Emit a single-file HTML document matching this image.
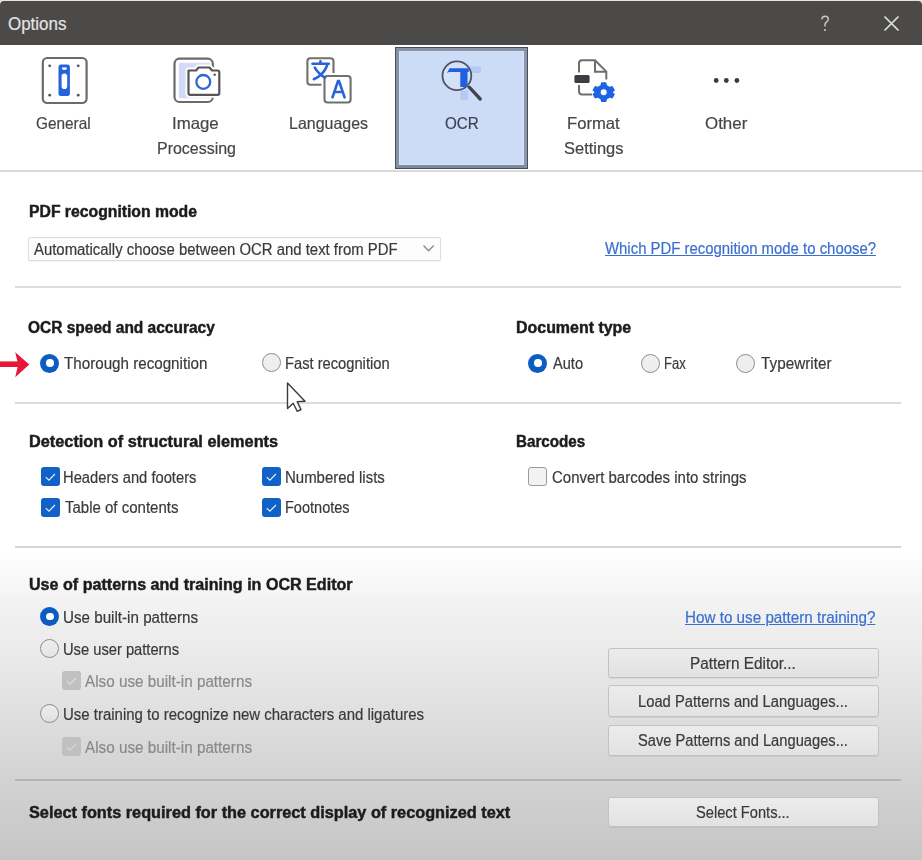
<!DOCTYPE html>
<html><head><meta charset="utf-8">
<style>
html,body{margin:0;padding:0;width:922px;height:860px;overflow:hidden;}
body{position:relative;font-family:"Liberation Sans",sans-serif;background:linear-gradient(to bottom,#ffffff 0px,#ffffff 550px,#f3f3f3 600px,#e2e2e2 700px,#d2d2d2 780px,#c6c6c6 860px);}
.tx{position:absolute;white-space:nowrap;transform-origin:0 0;}
.tx.b{-webkit-text-stroke:0.45px currentColor;}
.tx.r{-webkit-text-stroke:0.2px currentColor;}
.abs{position:absolute;}
.sep{position:absolute;left:15px;width:886px;height:2px;background:#dcdcdc;}
.rad{position:absolute;width:19px;height:19px;border-radius:50%;box-sizing:border-box;}
.rad.on{background:#0b5dc2;}
.rad.on::after{content:"";position:absolute;left:5.7px;top:5.7px;width:7.6px;height:7.6px;border-radius:50%;background:#fff;}
.rad.off{border:1.6px solid #8c8c8c;background:linear-gradient(rgba(238,238,238,0.9),rgba(225,225,225,0.6));}
.chk{position:absolute;width:19px;height:19px;border-radius:3px;box-sizing:border-box;}
.chk.on{background:#1061c8;}
.chk.off{border:1.5px solid #9a9a9a;background:#f2f2f2;}
.chk.dis{background:#c0c0c0;}
.btn{position:absolute;left:608px;width:271px;box-sizing:border-box;border:1px solid #c2c2c2;border-radius:3px;background:linear-gradient(#ececec,#e2e2e2);box-shadow:0 1px 0 rgba(0,0,0,0.06);}
#wrap{position:absolute;left:0;top:0;width:922px;height:860px;filter:blur(0.35px);}
</style></head><body><div id="wrap">
<!-- title bar -->
<div class="abs" style="left:0;top:0;width:922px;height:2px;background:#e4e4e4"></div>
<div class="abs" style="left:0;top:1px;width:922px;height:44px;background:#4b4a48;border-radius:4px 4px 0 0"></div>
<svg class="abs" style="left:815px;top:12px" width="20" height="24" viewBox="0 0 20 24">
<path d="M6.8 7.4 C7 5 8.5 4.2 10 4.2 C11.9 4.2 13.3 5.4 13.3 7.2 C13.3 9.2 11.6 9.9 10.6 10.9 C10 11.5 9.9 12.3 9.9 14.4" fill="none" stroke="#c4c4c4" stroke-width="1.5"/>
<circle cx="9.9" cy="18" r="1.1" fill="#c4c4c4"/>
</svg>
<svg class="abs" style="left:882px;top:14px" width="19" height="19" viewBox="0 0 19 19">
<path d="M2.5 2.5 L16.5 16.5 M16.5 2.5 L2.5 16.5" stroke="#dedede" stroke-width="1.7"/>
</svg>

<!-- toolbar -->
<div class="abs" style="left:395px;top:47px;width:133px;height:122px;box-sizing:border-box;border:1.6px solid #474e59;background:#cddcf6;">
  <div class="abs" style="left:0;top:0;right:0;bottom:0;border:3px solid #8792a6;border-right-color:#8d97ab;border-bottom-color:#7f899c"></div>
  <div class="abs" style="left:3px;top:3px;right:3px;bottom:3px;border:1px solid #d6e2f8;"></div>
</div>
<div class="abs" style="left:0;top:170px;width:922px;height:2px;background:#dadada"></div>

<!-- General icon -->
<svg class="abs" style="left:30px;top:50px" width="70" height="60" viewBox="0 0 70 60">
<rect x="12.8" y="8" width="43.8" height="45" rx="4.5" fill="#fff" stroke="#6b6b6b" stroke-width="2.2"/>
<circle cx="19.7" cy="15.8" r="1.4" fill="#555"/><circle cx="48.2" cy="15.8" r="1.4" fill="#555"/>
<circle cx="19.7" cy="45.2" r="1.4" fill="#555"/><circle cx="48.2" cy="45.2" r="1.4" fill="#555"/>
<rect x="28.5" y="14.4" width="11.4" height="31.6" rx="2.5" fill="#2463dc"/>
<ellipse cx="34.4" cy="18.6" rx="2.6" ry="1.3" fill="#fff"/>
<rect x="31.6" y="23.5" width="5.6" height="15.5" rx="2.8" fill="#fff"/>
</svg>

<!-- Image processing icon -->
<svg class="abs" style="left:165px;top:50px" width="70" height="60" viewBox="0 0 70 60">
<rect x="9.5" y="8.7" width="38.3" height="43.3" rx="5" fill="#fff" stroke="#6b6b6b" stroke-width="2.2"/>
<rect x="13.8" y="12.8" width="31.5" height="35.5" rx="1.5" fill="#d3dbf6"/>
<path d="M23.5 20.5 L31 20.5 L33.5 17.5 L44.5 17.5 L47 20.5 L52.5 20.5 Q54.3 20.5 54.3 22.3 L54.3 43 Q54.3 44.8 52.5 44.8 L25.3 44.8 Q23.5 44.8 23.5 43 Z" fill="#fff" stroke="#fff" stroke-width="6" stroke-linejoin="round"/>
<path d="M23.5 20.5 L31 20.5 L33.5 17.5 L44.5 17.5 L47 20.5 L52.5 20.5 Q54.3 20.5 54.3 22.3 L54.3 43 Q54.3 44.8 52.5 44.8 L25.3 44.8 Q23.5 44.8 23.5 43 Z" fill="#fff" stroke="#555" stroke-width="2.2" stroke-linejoin="round"/>
<circle cx="38.3" cy="31.9" r="6.9" fill="none" stroke="#2f66d0" stroke-width="2.3"/>
<circle cx="49.7" cy="24.7" r="1.2" fill="#555"/>
</svg>

<!-- Languages icon -->
<svg class="abs" style="left:295px;top:50px" width="70" height="60" viewBox="0 0 70 60">
<rect x="12.4" y="8.2" width="26.1" height="26.5" rx="3" fill="#fff" stroke="#707070" stroke-width="2.1"/>
<rect x="26.5" y="23" width="31" height="33" fill="#fff"/>
<rect x="29.5" y="26" width="26.1" height="26.5" rx="3" fill="#fff" stroke="#707070" stroke-width="2.1"/>
<g stroke="#2a63d8" stroke-width="2.6" fill="none" stroke-linecap="round">
<path d="M17.5 13.8 L33.8 13.8"/><path d="M25.4 11.2 L25.4 13.5"/>
<path d="M19.8 17.6 Q23.5 24 30 27.5"/><path d="M32 15.8 Q28.5 25 18.8 29.2"/>
<path d="M37.5 47.3 L43 31 L44 31 L49.6 47.3"/><path d="M39.8 42 L47.3 42"/>
</g>
</svg>

<!-- OCR icon -->
<svg class="abs" style="left:425px;top:50px" width="70" height="60" viewBox="0 0 70 60">
<rect x="43.5" y="16.5" width="12.5" height="6.5" fill="#a9bdf4" opacity="0.65"/>
<rect x="35.5" y="40.5" width="7.5" height="9.5" fill="#a9bdf4" opacity="0.65"/>
<circle cx="31.9" cy="25.8" r="14.4" fill="#d4e1f7" stroke="#4d5563" stroke-width="1.8"/>
<path d="M22 23 L24.5 18.3 L43.8 18.3 L43.8 22 L42.5 22 L42.5 37 L35.3 37 L35.3 22 L24 22 Z" fill="#1f5fe0"/>
<path d="M44.2 37.2 L55.2 49" stroke="#3d4450" stroke-width="3.3" stroke-linecap="round"/>
</svg>

<!-- Format Settings icon -->
<svg class="abs" style="left:560px;top:50px" width="70" height="60" viewBox="0 0 70 60">
<path d="M19 22.5 L19 13.5 Q19 10.3 22.2 10.3 L35 10.3 L46.3 21.6 L46.3 29.5" fill="none" stroke="#6e6e6e" stroke-width="2"/>
<path d="M19 35 L19 41.2 Q19 44.4 22.2 44.4 L32 44.4" fill="none" stroke="#6e6e6e" stroke-width="2"/>
<path d="M35 10.3 L35 21.8 L46.3 21.8" fill="none" stroke="#6e6e6e" stroke-width="2"/>
<rect x="14.4" y="25" width="15.2" height="8" rx="1.5" fill="#3b3f44"/>
<g transform="translate(43.7 42.1)">
<path d="M-2.4 -9.6 L2.4 -9.6 L3.2 -6.8 L5.8 -5.3 L8.6 -6.1 L11 -1.9 L8.9 0.1 L8.9 0.1 L11 2.1 L8.6 6.3 L5.8 5.5 L3.2 7 L2.4 9.8 L-2.4 9.8 L-3.2 7 L-5.8 5.5 L-8.6 6.3 L-11 2.1 L-8.9 0.1 L-11 -1.9 L-8.6 -6.1 L-5.8 -5.3 L-3.2 -6.8 Z" fill="#1f62e6" transform="scale(1.02)"/>
<circle cx="0" cy="0.1" r="3" fill="#fff"/>
</g>
</svg>

<!-- Other icon -->
<svg class="abs" style="left:690px;top:60px" width="70" height="40" viewBox="0 0 70 40">
<circle cx="26.2" cy="20.5" r="2.4" fill="#3a3a3a"/><circle cx="36.3" cy="20.5" r="2.4" fill="#3a3a3a"/><circle cx="46.9" cy="20.5" r="2.4" fill="#3a3a3a"/>
</svg>

<!-- body -->
<div class="abs" style="left:28px;top:237px;width:413px;height:24px;box-sizing:border-box;border:1px solid #dcdcdc;background:#fdfdfd;border-radius:2px;box-shadow:0 1px 1px rgba(0,0,0,0.05)"></div>
<svg class="abs" style="left:420px;top:240px" width="18" height="16" viewBox="0 0 18 16">
<path d="M3.5 5.5 L8.6 10.8 L13.7 5.5" fill="none" stroke="#8a8a8a" stroke-width="1.3"/>
</svg>
<div class="sep" style="top:286px"></div>
<div class="sep" style="top:402px"></div>
<div class="sep" style="top:546px;background:#d6d6d6"></div>
<div class="sep" style="top:779px;background:#b4b4b4"></div>

<!-- red arrow -->
<svg class="abs" style="left:0;top:345px" width="40" height="40" viewBox="0 0 40 40">
<path d="M0 16.4 L18 16.4 L18 22 L0 22 Z" fill="#e8163b"/>
<path d="M15.2 7.2 L29.3 19.4 L15.2 32.3 L18.2 19.4 Z" fill="#e8163b"/>
</svg>

<div class="rad on" style="left:40.3px;top:353.5px"></div>
<div class="rad off" style="left:261.7px;top:353.3px"></div>
<div class="rad on" style="left:528.4px;top:353.5px"></div>
<div class="rad off" style="left:641.2px;top:353.5px"></div>
<div class="rad off" style="left:736.4px;top:353.5px"></div>

<!-- cursor -->
<svg class="abs" style="left:283px;top:380px" width="30" height="34" viewBox="0 0 30 34">
<path d="M4.5 3 L4.5 28.5 L10.2 23.2 L14.2 31.3 L18 29.5 L14.2 21.6 L22 21.2 Z" fill="#fff" stroke="#3a3a3a" stroke-width="1.4" stroke-linejoin="round"/>
</svg>

<div class="chk on" style="left:40.6px;top:467.3px"></div>
<div class="chk on" style="left:40.6px;top:497.7px"></div>
<div class="chk on" style="left:261.9px;top:467.3px"></div>
<div class="chk on" style="left:261.9px;top:497.7px"></div>
<div class="chk off" style="left:528.4px;top:466.8px"></div>

<div class="rad on" style="left:40.3px;top:607.2px"></div>
<div class="rad off" style="left:40.3px;top:639.3px"></div>
<div class="chk dis" style="left:62.2px;top:671px"></div>
<div class="rad off" style="left:40.3px;top:704.4px"></div>
<div class="chk dis" style="left:62.2px;top:737px"></div>

<div class="btn" style="top:648px;height:30px"></div>
<div class="btn" style="top:684.8px;height:32px"></div>
<div class="btn" style="top:724.5px;height:31.5px"></div>
<div class="btn" style="top:796.7px;height:30.5px"></div>

<svg class="abs" style="left:40.6px;top:467.3px" width="19" height="19" viewBox="0 0 19 19"><path d="M4.8 10.2 L7.9 13.2 L13.9 7" fill="none" stroke="#fff" stroke-width="1.15" stroke-opacity="0.92"/></svg>
<svg class="abs" style="left:40.6px;top:497.7px" width="19" height="19" viewBox="0 0 19 19"><path d="M4.8 10.2 L7.9 13.2 L13.9 7" fill="none" stroke="#fff" stroke-width="1.15" stroke-opacity="0.92"/></svg>
<svg class="abs" style="left:261.9px;top:467.3px" width="19" height="19" viewBox="0 0 19 19"><path d="M4.8 10.2 L7.9 13.2 L13.9 7" fill="none" stroke="#fff" stroke-width="1.15" stroke-opacity="0.92"/></svg>
<svg class="abs" style="left:261.9px;top:497.7px" width="19" height="19" viewBox="0 0 19 19"><path d="M4.8 10.2 L7.9 13.2 L13.9 7" fill="none" stroke="#fff" stroke-width="1.15" stroke-opacity="0.92"/></svg>
<svg class="abs" style="left:62.2px;top:671px" width="19" height="19" viewBox="0 0 19 19"><path d="M4.8 10.2 L7.9 13.2 L13.9 7" fill="none" stroke="#e2e2e2" stroke-width="1.15" stroke-opacity="0.92"/></svg>
<svg class="abs" style="left:62.2px;top:737px" width="19" height="19" viewBox="0 0 19 19"><path d="M4.8 10.2 L7.9 13.2 L13.9 7" fill="none" stroke="#dadada" stroke-width="1.15" stroke-opacity="0.92"/></svg>

<div class="tx r" style="left:7.6px;top:15.0px;font-size:18px;line-height:18px;font-weight:400;color:#e4e4e4;transform:scaleX(0.9412);">Options</div>
<div class="tx r" style="left:36.1px;top:115.0px;font-size:16.5px;line-height:16.5px;font-weight:400;color:#464646;transform:scaleX(0.9318);">General</div>
<div class="tx r" style="left:172.3px;top:115.0px;font-size:16.5px;line-height:16.5px;font-weight:400;color:#464646;transform:scaleX(1.0183);">Image</div>
<div class="tx r" style="left:156.5px;top:139.5px;font-size:16.5px;line-height:16.5px;font-weight:400;color:#464646;transform:scaleX(0.9678);">Processing</div>
<div class="tx r" style="left:289.0px;top:115.0px;font-size:16.5px;line-height:16.5px;font-weight:400;color:#464646;transform:scaleX(0.9673);">Languages</div>
<div class="tx r" style="left:444.5px;top:115.0px;font-size:16.5px;line-height:16.5px;font-weight:400;color:#3d4250;transform:scaleX(0.9217);">OCR</div>
<div class="tx r" style="left:567.4px;top:115.0px;font-size:16.5px;line-height:16.5px;font-weight:400;color:#464646;transform:scaleX(1.0083);">Format</div>
<div class="tx r" style="left:564.2px;top:139.5px;font-size:16.5px;line-height:16.5px;font-weight:400;color:#464646;transform:scaleX(0.9979);">Settings</div>
<div class="tx r" style="left:704.8px;top:115.0px;font-size:16.5px;line-height:16.5px;font-weight:400;color:#464646;transform:scaleX(1.0247);">Other</div>
<div class="tx b" style="left:29.0px;top:204.0px;font-size:16px;line-height:16px;font-weight:700;color:#1c1c1c;transform:scaleX(0.9843);">PDF recognition mode</div>
<div class="tx b" style="left:28.2px;top:320.0px;font-size:16px;line-height:16px;font-weight:700;color:#1c1c1c;transform:scaleX(0.9680);">OCR speed and accuracy</div>
<div class="tx b" style="left:516.3px;top:320.0px;font-size:16px;line-height:16px;font-weight:700;color:#1c1c1c;transform:scaleX(0.9967);">Document type</div>
<div class="tx b" style="left:28.7px;top:434.0px;font-size:16px;line-height:16px;font-weight:700;color:#1c1c1c;transform:scaleX(1.0188);">Detection of structural elements</div>
<div class="tx b" style="left:516.3px;top:434.0px;font-size:16px;line-height:16px;font-weight:700;color:#1c1c1c;transform:scaleX(0.9476);">Barcodes</div>
<div class="tx b" style="left:28.6px;top:577.0px;font-size:16px;line-height:16px;font-weight:700;color:#1c1c1c;transform:scaleX(1.0056);">Use of patterns and training in OCR Editor</div>
<div class="tx b" style="left:28.5px;top:805.0px;font-size:16px;line-height:16px;font-weight:700;color:#1c1c1c;transform:scaleX(1.0173);">Select fonts required for the correct display of recognized text</div>
<div class="tx r" style="left:33.8px;top:242.0px;font-size:16px;line-height:16px;font-weight:400;color:#3a3a3a;transform:scaleX(0.9314);">Automatically choose between OCR and text from PDF</div>
<div class="tx r" style="left:605.0px;top:240.7px;font-size:16px;line-height:16px;font-weight:400;color:#3a6fd0;transform:scaleX(0.9319);text-decoration:underline;">Which PDF recognition mode to choose?</div>
<div class="tx r" style="left:64.4px;top:356.0px;font-size:16px;line-height:16px;font-weight:400;color:#3a3a3a;transform:scaleX(0.9483);">Thorough recognition</div>
<div class="tx r" style="left:285.0px;top:356.0px;font-size:16px;line-height:16px;font-weight:400;color:#3a3a3a;transform:scaleX(0.9188);">Fast recognition</div>
<div class="tx r" style="left:552.7px;top:356.0px;font-size:16px;line-height:16px;font-weight:400;color:#3a3a3a;transform:scaleX(0.9112);">Auto</div>
<div class="tx r" style="left:664.4px;top:356.0px;font-size:16px;line-height:16px;font-weight:400;color:#3a3a3a;transform:scaleX(0.8136);">Fax</div>
<div class="tx r" style="left:760.7px;top:356.0px;font-size:16px;line-height:16px;font-weight:400;color:#3a3a3a;transform:scaleX(0.9553);">Typewriter</div>
<div class="tx r" style="left:63.4px;top:470.0px;font-size:16px;line-height:16px;font-weight:400;color:#3a3a3a;transform:scaleX(0.9201);">Headers and footers</div>
<div class="tx r" style="left:64.5px;top:500.0px;font-size:16px;line-height:16px;font-weight:400;color:#3a3a3a;transform:scaleX(0.9374);">Table of contents</div>
<div class="tx r" style="left:284.7px;top:470.0px;font-size:16px;line-height:16px;font-weight:400;color:#3a3a3a;transform:scaleX(0.9353);">Numbered lists</div>
<div class="tx r" style="left:284.7px;top:500.0px;font-size:16px;line-height:16px;font-weight:400;color:#3a3a3a;transform:scaleX(0.9079);">Footnotes</div>
<div class="tx r" style="left:552.4px;top:470.0px;font-size:16px;line-height:16px;font-weight:400;color:#3a3a3a;transform:scaleX(0.9351);">Convert barcodes into strings</div>
<div class="tx r" style="left:63.0px;top:610.0px;font-size:16px;line-height:16px;font-weight:400;color:#3a3a3a;transform:scaleX(0.9487);">Use built-in patterns</div>
<div class="tx r" style="left:63.0px;top:642.0px;font-size:16px;line-height:16px;font-weight:400;color:#3a3a3a;transform:scaleX(0.9186);">Use user patterns</div>
<div class="tx r" style="left:85.2px;top:674.0px;font-size:16px;line-height:16px;font-weight:400;color:#8a8a8a;transform:scaleX(0.9532);">Also use built-in patterns</div>
<div class="tx r" style="left:63.0px;top:707.0px;font-size:16px;line-height:16px;font-weight:400;color:#3a3a3a;transform:scaleX(0.9353);">Use training to recognize new characters and ligatures</div>
<div class="tx r" style="left:85.2px;top:740.0px;font-size:16px;line-height:16px;font-weight:400;color:#8a8a8a;transform:scaleX(0.9532);">Also use built-in patterns</div>
<div class="tx r" style="left:684.5px;top:610.0px;font-size:16px;line-height:16px;font-weight:400;color:#3a6fd0;transform:scaleX(0.9514);text-decoration:underline;">How to use pattern training?</div>
<div class="tx r" style="left:690.3px;top:656.0px;font-size:16px;line-height:16px;font-weight:400;color:#3a3a3a;transform:scaleX(0.9594);">Pattern Editor...</div>
<div class="tx r" style="left:638.2px;top:694.0px;font-size:16px;line-height:16px;font-weight:400;color:#3a3a3a;transform:scaleX(0.9217);">Load Patterns and Languages...</div>
<div class="tx r" style="left:638.2px;top:733.0px;font-size:16px;line-height:16px;font-weight:400;color:#3a3a3a;transform:scaleX(0.9182);">Save Patterns and Languages...</div>
<div class="tx r" style="left:695.9px;top:805.0px;font-size:16px;line-height:16px;font-weight:400;color:#3a3a3a;transform:scaleX(0.9162);">Select Fonts...</div>
</div></body></html>
